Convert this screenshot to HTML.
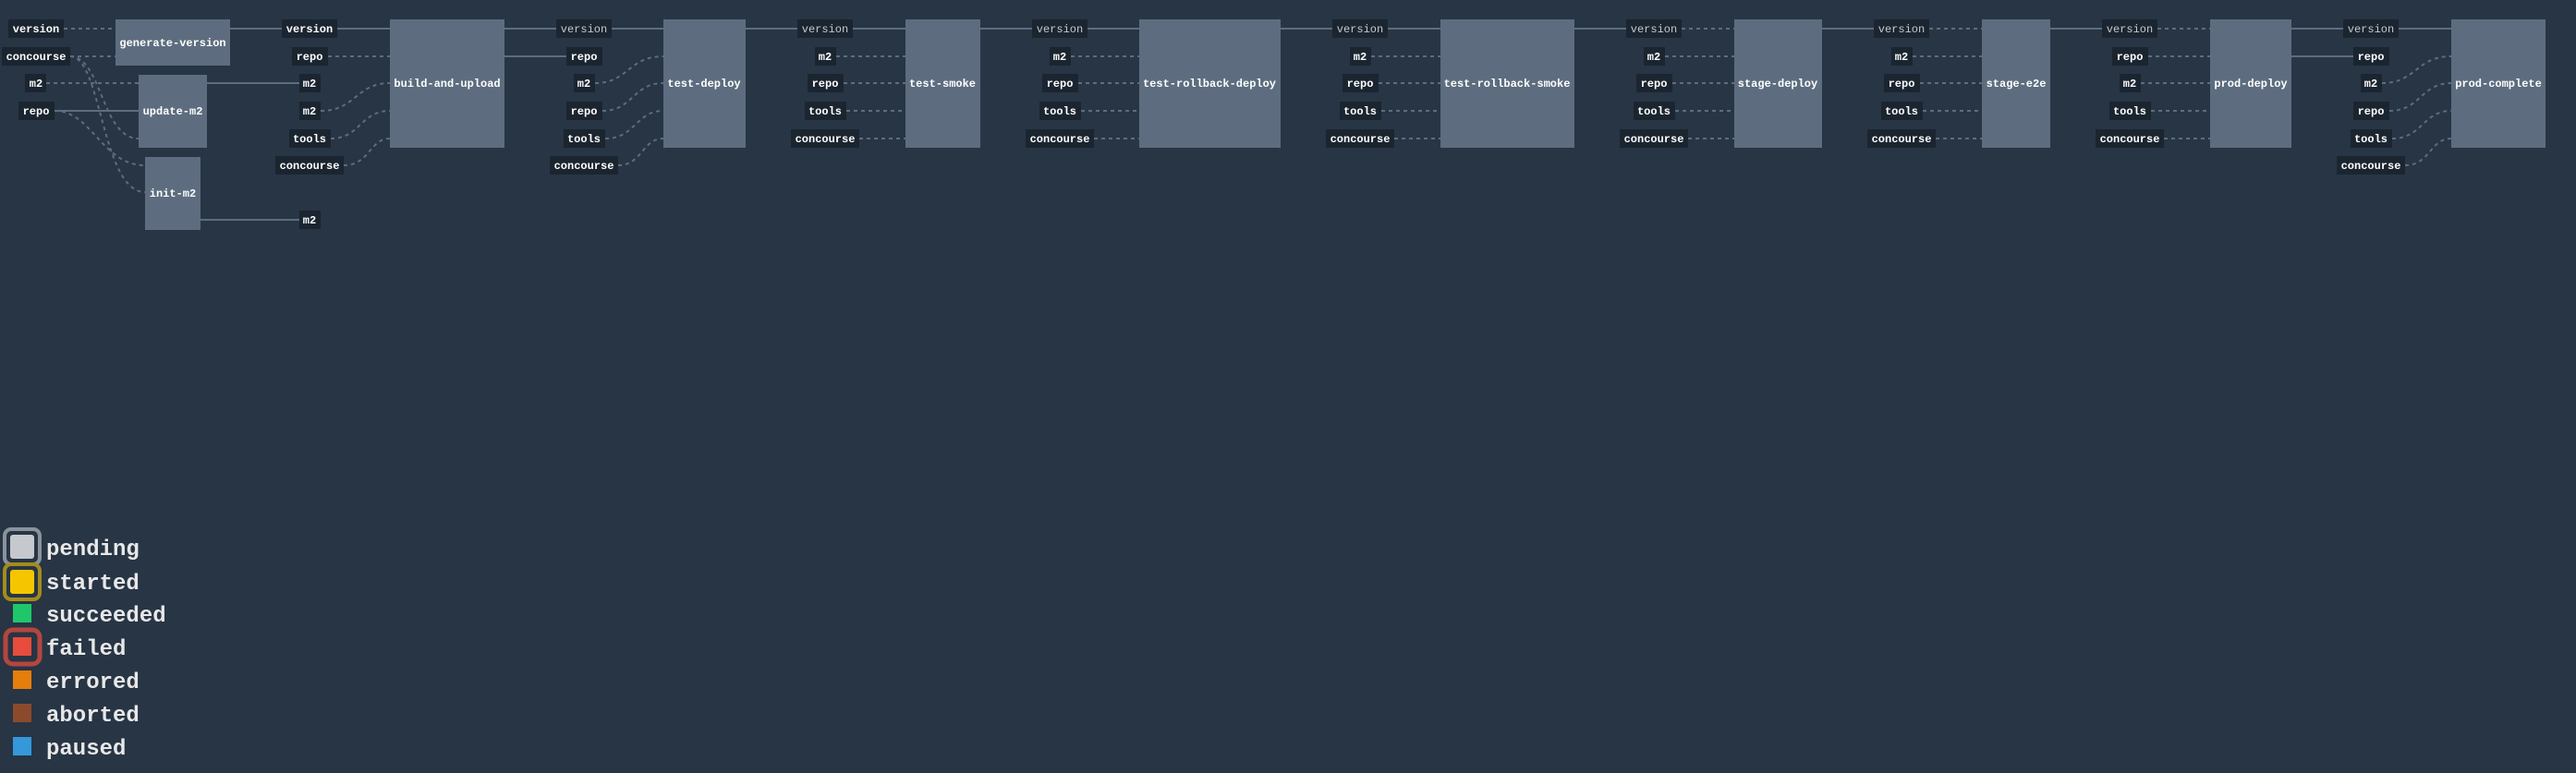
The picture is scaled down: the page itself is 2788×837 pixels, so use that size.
<!DOCTYPE html>
<html><head><meta charset="utf-8"><style>
html,body{margin:0;padding:0;background:#273545;width:2788px;height:837px;overflow:hidden}
svg{position:absolute;left:0;top:0}
.s{stroke:#5d6d7e;stroke-width:2;fill:none}
.d{stroke:#5d6d7e;stroke-width:2;fill:none;stroke-dasharray:4 4}
.lb{fill:#1b2530}
.lt{font-family:"Liberation Mono",monospace;font-weight:bold;font-size:12px;fill:#fff;text-anchor:middle}
.lv{font-family:"Liberation Mono",monospace;font-size:12px;fill:#c4c9ce;text-anchor:middle}
.bx{fill:#5d6d7f}
.bt{font-family:"Liberation Mono",monospace;font-weight:bold;font-size:12px;fill:#fff;text-anchor:middle}
.lg{font-family:"Liberation Mono",monospace;font-weight:bold;font-size:24px;fill:#e8e8e8}
</style></head><body>
<svg width="2788" height="837" viewBox="0 0 2788 837">
<g class="s">
<path d="M249 31H305M365 31H422"/>
<path d="M224 90H324"/>
<path d="M59 120H150"/>
<path d="M217 238H324"/>
<path d="M546 31H602M546 61H613M662 31H718"/>
<path d="M807 31H863M923 31H980"/>
<path d="M1061 31H1117M1177 31H1233"/>
<path d="M1386 31H1442M1502 31H1559"/>
<path d="M1704 31H1760"/>
<path d="M1972 31H2028"/>
<path d="M2219 31H2275"/>
<path d="M2480 31H2536M2480 61H2547M2596 31H2653"/>
</g>
<g class="d">
<path d="M69 31H125M76 61H125M50 90H150"/>
<path d="M76 61C110 61 110 150 150 150"/>
<path d="M76 61C110 61 110 208 157 208"/>
<path d="M59 120C100 120 110 179 157 179"/>
<path d="M355 61H422"/>
<path d="M347 120C385 120 385 90 422 90"/>
<path d="M358 150C390 150 390 120 422 120"/>
<path d="M372 179C400 179 400 150 422 150"/>
<path d="M644 90C680 90 680 61 718 61"/>
<path d="M652 120C685 120 685 90 718 90"/>
<path d="M655 150C688 150 688 120 718 120"/>
<path d="M669 179C695 179 695 150 718 150"/>
<path d="M905 61H980M913 90H980M916 120H980M930 150H980"/>
<path d="M1159 61H1233M1167 90H1233M1170 120H1233M1184 150H1233"/>
<path d="M1484 61H1559M1492 90H1559M1495 120H1559M1509 150H1559"/>
<path d="M1820 31H1877M1802 61H1877M1810 90H1877M1813 120H1877M1827 150H1877"/>
<path d="M2088 31H2145M2070 61H2145M2078 90H2145M2081 120H2145M2095 150H2145"/>
<path d="M2335 31H2392M2325 61H2392M2317 90H2392M2328 120H2392M2342 150H2392"/>
<path d="M2578 90C2615 90 2615 61 2653 61"/>
<path d="M2586 120C2620 120 2620 90 2653 90"/>
<path d="M2589 150C2622 150 2622 120 2653 120"/>
<path d="M2603 179C2630 179 2630 150 2653 150"/>
</g>
<rect class="bx" x="125" y="21" width="124" height="50"/><text class="bt" x="187" y="50">generate-version</text>
<rect class="bx" x="150" y="81" width="74" height="79"/><text class="bt" x="187" y="124">update-m2</text>
<rect class="bx" x="157" y="170" width="60" height="79"/><text class="bt" x="187" y="213">init-m2</text>
<rect class="bx" x="422" y="21" width="124" height="139"/><text class="bt" x="484" y="94">build-and-upload</text>
<rect class="bx" x="718" y="21" width="89" height="139"/><text class="bt" x="762" y="94">test-deploy</text>
<rect class="bx" x="980" y="21" width="81" height="139"/><text class="bt" x="1020" y="94">test-smoke</text>
<rect class="bx" x="1233" y="21" width="153" height="139"/><text class="bt" x="1309" y="94">test-rollback-deploy</text>
<rect class="bx" x="1559" y="21" width="145" height="139"/><text class="bt" x="1631" y="94">test-rollback-smoke</text>
<rect class="bx" x="1877" y="21" width="95" height="139"/><text class="bt" x="1924" y="94">stage-deploy</text>
<rect class="bx" x="2145" y="21" width="74" height="139"/><text class="bt" x="2182" y="94">stage-e2e</text>
<rect class="bx" x="2392" y="21" width="88" height="139"/><text class="bt" x="2436" y="94">prod-deploy</text>
<rect class="bx" x="2653" y="21" width="102" height="139"/><text class="bt" x="2704" y="94">prod-complete</text>
<g>
<rect class="lb" x="9" y="21" width="60" height="20"/><text class="lt" x="39" y="35">version</text>
<rect class="lb" x="2" y="51" width="74" height="20"/><text class="lt" x="39" y="65">concourse</text>
<rect class="lb" x="27" y="80" width="23" height="20"/><text class="lt" x="39" y="94">m2</text>
<rect class="lb" x="20" y="110" width="39" height="20"/><text class="lt" x="39" y="124">repo</text>
<rect class="lb" x="305" y="21" width="60" height="20"/><text class="lt" x="335" y="35">version</text>
<rect class="lb" x="316" y="51" width="39" height="20"/><text class="lt" x="335" y="65">repo</text>
<rect class="lb" x="324" y="80" width="23" height="20"/><text class="lt" x="335" y="94">m2</text>
<rect class="lb" x="324" y="110" width="23" height="20"/><text class="lt" x="335" y="124">m2</text>
<rect class="lb" x="313" y="140" width="45" height="20"/><text class="lt" x="335" y="154">tools</text>
<rect class="lb" x="298" y="169" width="74" height="20"/><text class="lt" x="335" y="183">concourse</text>
<rect class="lb" x="324" y="228" width="23" height="20"/><text class="lt" x="335" y="242">m2</text>
<rect class="lb" x="602" y="21" width="60" height="20"/><text class="lv" x="632" y="35">version</text>
<rect class="lb" x="613" y="51" width="39" height="20"/><text class="lt" x="632" y="65">repo</text>
<rect class="lb" x="621" y="80" width="23" height="20"/><text class="lt" x="632" y="94">m2</text>
<rect class="lb" x="613" y="110" width="39" height="20"/><text class="lt" x="632" y="124">repo</text>
<rect class="lb" x="610" y="140" width="45" height="20"/><text class="lt" x="632" y="154">tools</text>
<rect class="lb" x="595" y="169" width="74" height="20"/><text class="lt" x="632" y="183">concourse</text>
<rect class="lb" x="863" y="21" width="60" height="20"/><text class="lv" x="893" y="35">version</text>
<rect class="lb" x="882" y="51" width="23" height="20"/><text class="lt" x="893" y="65">m2</text>
<rect class="lb" x="874" y="80" width="39" height="20"/><text class="lt" x="893" y="94">repo</text>
<rect class="lb" x="871" y="110" width="45" height="20"/><text class="lt" x="893" y="124">tools</text>
<rect class="lb" x="856" y="140" width="74" height="20"/><text class="lt" x="893" y="154">concourse</text>
<rect class="lb" x="1117" y="21" width="60" height="20"/><text class="lv" x="1147" y="35">version</text>
<rect class="lb" x="1136" y="51" width="23" height="20"/><text class="lt" x="1147" y="65">m2</text>
<rect class="lb" x="1128" y="80" width="39" height="20"/><text class="lt" x="1147" y="94">repo</text>
<rect class="lb" x="1125" y="110" width="45" height="20"/><text class="lt" x="1147" y="124">tools</text>
<rect class="lb" x="1110" y="140" width="74" height="20"/><text class="lt" x="1147" y="154">concourse</text>
<rect class="lb" x="1442" y="21" width="60" height="20"/><text class="lv" x="1472" y="35">version</text>
<rect class="lb" x="1461" y="51" width="23" height="20"/><text class="lt" x="1472" y="65">m2</text>
<rect class="lb" x="1453" y="80" width="39" height="20"/><text class="lt" x="1472" y="94">repo</text>
<rect class="lb" x="1450" y="110" width="45" height="20"/><text class="lt" x="1472" y="124">tools</text>
<rect class="lb" x="1435" y="140" width="74" height="20"/><text class="lt" x="1472" y="154">concourse</text>
<rect class="lb" x="1760" y="21" width="60" height="20"/><text class="lv" x="1790" y="35">version</text>
<rect class="lb" x="1779" y="51" width="23" height="20"/><text class="lt" x="1790" y="65">m2</text>
<rect class="lb" x="1771" y="80" width="39" height="20"/><text class="lt" x="1790" y="94">repo</text>
<rect class="lb" x="1768" y="110" width="45" height="20"/><text class="lt" x="1790" y="124">tools</text>
<rect class="lb" x="1753" y="140" width="74" height="20"/><text class="lt" x="1790" y="154">concourse</text>
<rect class="lb" x="2028" y="21" width="60" height="20"/><text class="lv" x="2058" y="35">version</text>
<rect class="lb" x="2047" y="51" width="23" height="20"/><text class="lt" x="2058" y="65">m2</text>
<rect class="lb" x="2039" y="80" width="39" height="20"/><text class="lt" x="2058" y="94">repo</text>
<rect class="lb" x="2036" y="110" width="45" height="20"/><text class="lt" x="2058" y="124">tools</text>
<rect class="lb" x="2021" y="140" width="74" height="20"/><text class="lt" x="2058" y="154">concourse</text>
<rect class="lb" x="2275" y="21" width="60" height="20"/><text class="lv" x="2305" y="35">version</text>
<rect class="lb" x="2286" y="51" width="39" height="20"/><text class="lt" x="2305" y="65">repo</text>
<rect class="lb" x="2294" y="80" width="23" height="20"/><text class="lt" x="2305" y="94">m2</text>
<rect class="lb" x="2283" y="110" width="45" height="20"/><text class="lt" x="2305" y="124">tools</text>
<rect class="lb" x="2268" y="140" width="74" height="20"/><text class="lt" x="2305" y="154">concourse</text>
<rect class="lb" x="2536" y="21" width="60" height="20"/><text class="lv" x="2566" y="35">version</text>
<rect class="lb" x="2547" y="51" width="39" height="20"/><text class="lt" x="2566" y="65">repo</text>
<rect class="lb" x="2555" y="80" width="23" height="20"/><text class="lt" x="2566" y="94">m2</text>
<rect class="lb" x="2547" y="110" width="39" height="20"/><text class="lt" x="2566" y="124">repo</text>
<rect class="lb" x="2544" y="140" width="45" height="20"/><text class="lt" x="2566" y="154">tools</text>
<rect class="lb" x="2529" y="169" width="74" height="20"/><text class="lt" x="2566" y="183">concourse</text>
</g>
<rect x="5" y="573" width="38" height="38" rx="7" fill="none" stroke="#8a939c" stroke-width="4"/>
<rect x="11" y="579" width="26" height="26" rx="3" fill="#c5c9cd"/>
<text class="lg" x="50" y="601">pending</text>
<rect x="5" y="611" width="38" height="38" rx="7" fill="none" stroke="#a38c1c" stroke-width="4"/>
<rect x="11" y="617" width="26" height="26" rx="3" fill="#f5c600"/>
<text class="lg" x="50" y="638">started</text>
<rect x="14" y="654" width="20" height="20" fill="#1fc76a"/>
<text class="lg" x="50" y="673">succeeded</text>
<rect x="6" y="682" width="37" height="37" rx="8" fill="none" stroke="#b5463e" stroke-width="5"/>
<rect x="14" y="690" width="20" height="20" fill="#e74c3c"/>
<text class="lg" x="50" y="709">failed</text>
<rect x="14" y="726" width="20" height="20" fill="#e67e0b"/>
<text class="lg" x="50" y="745">errored</text>
<rect x="14" y="762" width="20" height="20" fill="#8b4a2b"/>
<text class="lg" x="50" y="781">aborted</text>
<rect x="14" y="798" width="20" height="20" fill="#3498db"/>
<text class="lg" x="50" y="817">paused</text>
</svg>
</body></html>
